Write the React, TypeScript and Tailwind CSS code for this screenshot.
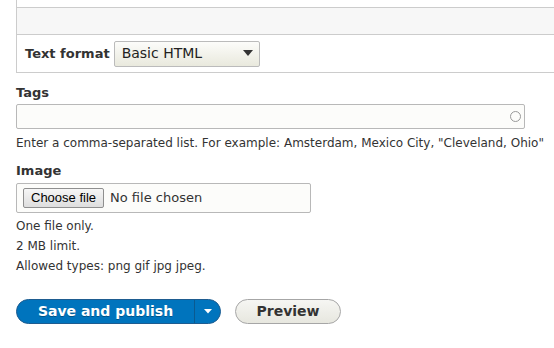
import React from "react";

export default function App() {
  return (
    <div className="w-[554px] h-[348px] overflow-hidden bg-white text-[#333] font-['DejaVu_Sans',sans-serif]">
      <div className="ml-4 border-l border-b border-[#ccc]">
        <div className="h-[7px]" />
        <div className="h-[28px] bg-[#f7f7f7] border-y border-[#ccc]" />
        <div className="h-[37px] flex items-center pl-[8px] gap-[4px]">
          <span className="text-[13px] font-bold">Text format</span>
          <div className="w-[146px] h-[26px] border border-[#bbb] rounded-[2px] bg-gradient-to-b from-[#fcfcfa] to-[#e9e9dd] flex items-center pl-[7px] pr-[6px] justify-between">
            <span className="text-[14px] text-[#222]">Basic HTML</span>
            <svg width="10" height="7" viewBox="0 0 10 7"><path d="M0 0h10L5 6z" fill="#333" /></svg>
          </div>
        </div>
      </div>

      <div className="px-4">
        <div className="mt-[11px] text-[13px] font-bold leading-[18px]">Tags</div>
        <div className="mt-[2px] w-[509px] h-[25px] border border-[#b8b8b8] rounded-[2px] bg-[#fcfcfa] flex items-center justify-end pr-[3px]">
          <div className="w-[11px] h-[11px] rounded-full border-[1.5px] border-[#999]" />
        </div>
        <div className="mt-[5px] text-[12px] leading-[18px] whitespace-nowrap">Enter a comma-separated list. For example: Amsterdam, Mexico City, "Cleveland, Ohio"</div>

        <div className="mt-[10px] text-[13px] font-bold leading-[18px]">Image</div>
        <div className="mt-[3px] w-[295px] h-[30px] border border-[#b8b8b8] rounded-[2px] bg-[#fcfcfa] flex items-center pl-[6px] gap-[6px]">
          <div className="h-[20px] px-[7px] border border-[#8f8f8f] rounded-[2px] bg-gradient-to-b from-[#f6f6f6] to-[#dedede] flex items-center text-[13px] text-black font-['Liberation_Sans',sans-serif]">Choose file</div>
          <span className="text-[13px]">No file chosen</span>
        </div>
        <div className="mt-[3px] text-[12px] leading-[20px]">
          <div>One file only.</div>
          <div>2 MB limit.</div>
          <div>Allowed types: png gif jpg jpeg.</div>
        </div>

        <div className="mt-[23px] flex items-center gap-[14px]">
          <div className="flex h-[25px] rounded-full bg-[#0074bd] border border-[#1e5c90] overflow-hidden text-white">
            <div className="w-[177px] flex items-center justify-center text-[14px] font-bold [text-shadow:0_1px_0_rgba(0,0,0,0.3)]">Save and publish</div>
            <div className="w-[26px] border-l border-[#0a5a90] flex items-center justify-center">
              <svg width="8" height="5" viewBox="0 0 8 5"><path d="M0 0h8L4 4.5z" fill="#fff" /></svg>
            </div>
          </div>
          <div className="w-[106px] h-[25px] rounded-full border border-[#a6a6a6] bg-gradient-to-b from-[#f6f6f3] to-[#e7e7df] flex items-center justify-center text-[14px] font-bold text-[#333]">Preview</div>
        </div>
      </div>
    </div>
  );
}
